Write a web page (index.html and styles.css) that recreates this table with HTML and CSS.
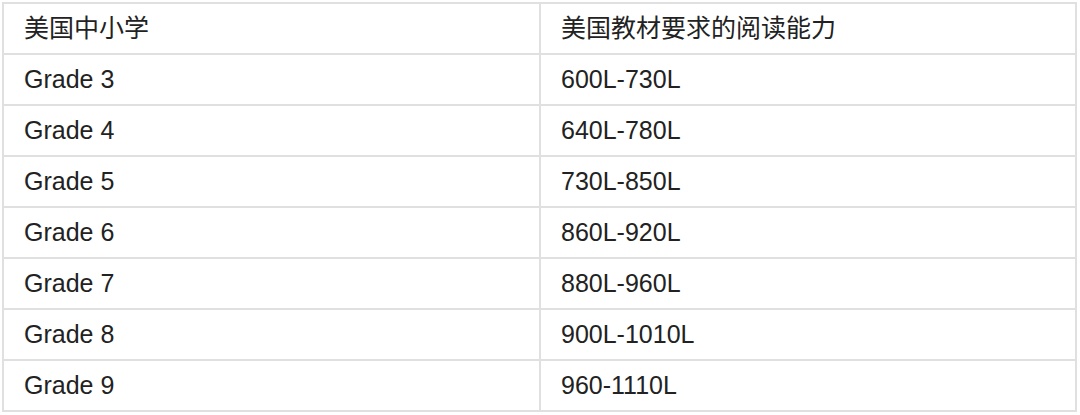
FILE: index.html
```html
<!DOCTYPE html>
<html lang="zh-CN">
<head>
<meta charset="utf-8">
<title>阅读能力</title>
<link rel="stylesheet" href="styles.css">
</head>
<body>
<table class="lexile">
  <tr><td>美国中小学</td><td>美国教材要求的阅读能力</td></tr>
  <tr><td>Grade 3</td><td>600L-730L</td></tr>
  <tr><td>Grade 4</td><td>640L-780L</td></tr>
  <tr><td>Grade 5</td><td>730L-850L</td></tr>
  <tr><td>Grade 6</td><td>860L-920L</td></tr>
  <tr><td>Grade 7</td><td>880L-960L</td></tr>
  <tr><td>Grade 8</td><td>900L-1010L</td></tr>
  <tr><td>Grade 9</td><td>960-1110L</td></tr>
</table>
</body>
</html>
```
FILE: styles.css
```css
html, body {
  margin: 0;
  padding: 0;
  background: #fff;
}
body {
  padding: 2px 3px 0 2px;
  font-family: "Liberation Sans", "Noto Sans CJK SC", sans-serif;
  font-size: 25px;
  color: #222;
}
.lexile {
  border-collapse: collapse;
  width: 1075px;
  table-layout: fixed;
}
.lexile td {
  border: 2px solid #e0e0e0;
  height: 51px;
  padding: 0 0 0 20px;
  vertical-align: middle;
  box-sizing: border-box;
  line-height: 1;
}
.lexile td:first-child {
  width: 537px;
}
```
